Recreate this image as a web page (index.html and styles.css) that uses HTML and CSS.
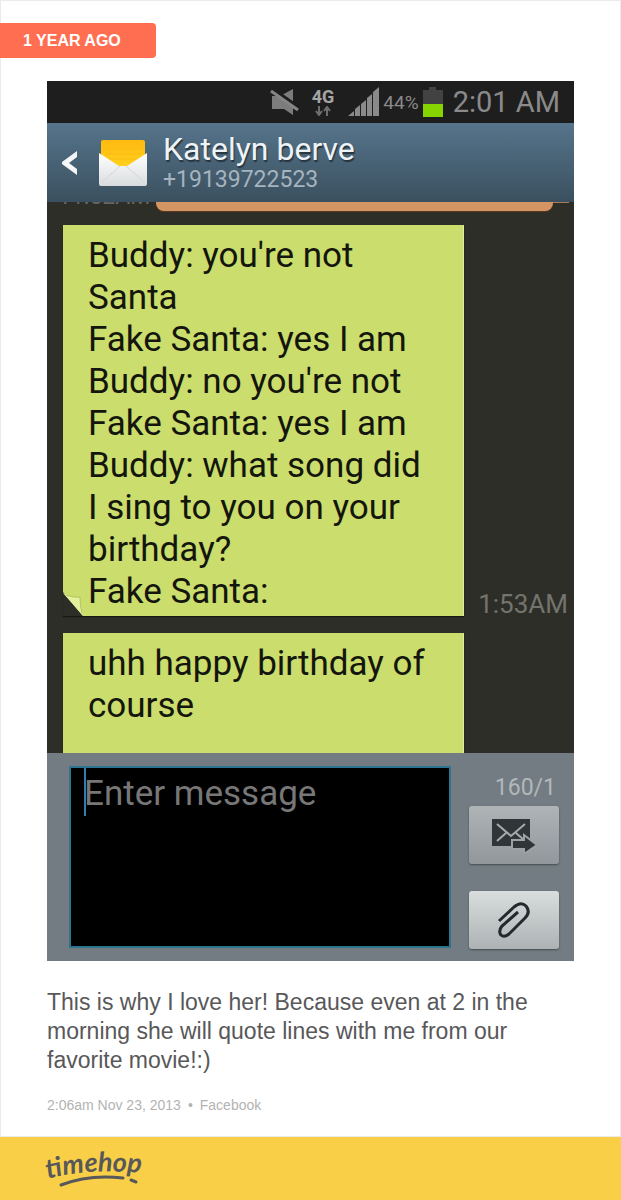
FILE: index.html
```html
<!DOCTYPE html>
<html lang="en">
  <head>
    <meta charset="UTF-8" />
    <meta name="viewport" content="width=device-width, initial-scale=1.0" />
    <title>Timehop</title>
    <link rel="stylesheet" href="styles.css">
  </head>
  <body>
    <main class="card">
      <div class="badge">1 YEAR AGO</div>

      <div class="phone">
        <div class="status">
          <svg class="mute" width="30" height="28" viewBox="0 0 30 28">
            <path d="M2 8h8L23 1v26l-9-6H2z" fill="#7c7c7c" />
            <path d="M1 0l28 20" stroke="#1e1e1e" stroke-width="4" />
            <path d="M1 3l27 19" stroke="#858585" stroke-width="3" />
          </svg>
          <div class="network">
            <span>4G</span>
            <svg width="16" height="10" viewBox="0 0 16 10">
              <path d="M4 0v8M1 5l3 4 3-4M12 10V2M9 5l3-4 3 4" fill="none" stroke="#6f6f6f" stroke-width="2" />
            </svg>
          </div>
          <svg class="signal" width="32" height="30" viewBox="0 0 32 30">
            <path d="M0 29l6-5v5zM7 22l5-4v11H7zM13 17l5-4v16h-5zM19 11l5-4v22h-5zM25 5l6-5v29h-6z" fill="#8a8a8a" />
          </svg>
          <span class="percent">44%</span>
          <svg class="battery" width="20" height="30" viewBox="0 0 20 30">
            <path d="M0 3h6V0h7v3h7v14H0z" fill="#424242" />
            <path d="M0 17h20v13H0z" fill="#86d500" />
          </svg>
          <span class="clock">2:01 AM</span>
        </div>

        <div class="contact">
          <button class="back" aria-label="Back">
            <svg width="18" height="26" viewBox="0 0 18 26">
              <path d="M16 1v6l-8 6 8 6v6L1 14v-2z" fill="#f4f6f7" />
            </svg>
          </button>
          <svg class="mail" width="48" height="48" viewBox="0 0 48 48">
            <defs>
              <linearGradient id="paper" x1="0" y1="0" x2="0" y2="1">
                <stop offset="0" stop-color="#ffba10" />
                <stop offset="1" stop-color="#ffd21c" />
              </linearGradient>
              <linearGradient id="cover" x1="0" y1="0" x2="0" y2="1">
                <stop offset="0" stop-color="#fff" />
                <stop offset="1" stop-color="#d9dcde" />
              </linearGradient>
            </defs>
            <path d="M2 3q0-2 2-2h40q2 0 2 2v26H2z" fill="url(#paper)" />
            <path d="M4 10h40M6 15h36M10 20h28" stroke="#f3a914" stroke-opacity=".4" />
            <path d="M0 14l17 11q2 2 4 2h6q2 0 4-2l17-11v31q0 2-2 2H2q-2 0-2-2z" fill="url(#cover)" />
            <path d="M3 43l18-16M45 43L27 27" fill="none" stroke="#d3d7d9" />
          </svg>
          <div class="who">
            <div class="name">Katelyn berve</div>
            <div class="number">+19139722523</div>
          </div>
        </div>

        <div class="thread">
          <div class="previous">
            <span class="earlier">11:52AM</span>
            <div class="sent"></div>
          </div>
          <div class="row">
            <div class="bubble">
              Buddy: you're not Santa<br />
              Fake Santa: yes I am<br />
              Buddy: no you're not<br />
              Fake Santa: yes I am<br />
              Buddy: what song did I&nbsp;sing to you on your birthday?<br />
              Fake Santa:
              <svg class="curl" width="20" height="24" viewBox="0 0 20 24">
                <path d="M0 0v24h20z" fill="#2d2e27" />
                <path d="M0 1q9 5 17 4 0 9 3 19z" fill="#e3f09c" />
                <path d="M3 3q8 3 14 2 0 9 2 16" fill="none" stroke="#b3c25f" />
              </svg>
            </div>
            <span class="time">1:53AM</span>
          </div>
          <div class="row">
            <div class="bubble cut">uhh happy birthday of course</div>
          </div>
        </div>

        <div class="compose">
          <div class="field">
            <textarea aria-label="Message" placeholder="Enter message"></textarea>
            <i class="caret"></i>
          </div>
          <div class="tools">
            <span class="count">160/1</span>
            <button class="send" aria-label="Send">
              <svg width="46" height="36" viewBox="0 0 46 36">
                <path d="M1 2h38v27H1z" fill="#303538" />
                <path d="M6 7l14 12L34 7M6 24l9-8M25 16l8 7" fill="none" stroke="#a5aaad" stroke-width="2" />
                <path d="M21 23h12v-5l13 10-13 9v-5H21z" fill="#303538" stroke="#9da2a5" stroke-width="2" />
              </svg>
            </button>
            <button class="attach" aria-label="Attach">
              <svg width="36" height="38" viewBox="0 0 36 38">
                <path d="M3 20L18 6q7-6 12-1 5 6-1 12L13 33q-5 4-8 1-3-4 1-9l16-14" fill="none" stroke="#26292b" stroke-width="3" />
              </svg>
            </button>
          </div>
        </div>
      </div>

      <p class="caption">This is why I love her! Because even at 2 in the morning she will quote lines with me from our favorite movie!:)</p>
      <p class="meta"><span>2:06am Nov 23, 2013</span><span>•</span><span>Facebook</span></p>
    </main>

    <footer class="footer">
      <svg class="logo" width="96" height="42" viewBox="0 0 96 42" role="img" aria-label="timehop">
        <path id="arc" d="M2 33Q40 22 96 27" fill="none" />
        <text><textPath href="#arc">timehop</textPath></text>
        <path d="M15 39Q43 28 77 32M85 34l5 2" fill="none" stroke="#58585a" stroke-width="3" stroke-linecap="round" />
      </svg>
    </footer>
  </body>
</html>
```
FILE: styles.css
```css
* {
  box-sizing: border-box;
}
body {
  margin: 0;
  background-color: #fff;
  font-family: "Liberation Sans", Arial, sans-serif;
}
button {
  border: none;
  padding: 0;
  background: none;
  cursor: pointer;
}
.card {
  border: 1px solid #ebebeb;
  padding: 22px 46px;
}
.badge {
  width: 156px;
  height: 35px;
  margin-left: -47px;
  padding-left: 23px;
  border-radius: 0 4px 4px 0;
  background-color: #ff6e50;
  color: #fff;
  font-size: 16px;
  font-weight: bold;
  line-height: 35px;
}

/* phone */
.phone {
  margin-top: 23px;
  background-color: #2d2e27;
  font-family: Roboto, sans-serif;
}
.status {
  display: flex;
  align-items: center;
  justify-content: flex-end;
  height: 42px;
  padding-right: 14px;
  background-color: #1e1e1e;
  color: #8a8a8a;
}
.mute {
  margin-right: 12px;
}
.network {
  display: flex;
  flex-direction: column;
  align-items: center;
  margin-right: 14px;
  color: #a5a5a5;
  font-size: 18px;
  font-weight: bold;
  line-height: 18px;
}
.signal {
  margin-right: 3px;
}
.percent {
  margin-right: 4px;
  font-size: 19px;
}
.battery {
  margin-right: 10px;
}
.clock {
  font-size: 29px;
}
.contact {
  display: flex;
  align-items: center;
  height: 79px;
  padding-left: 14px;
  background: linear-gradient(#56748b, #3a505f);
}
.back {
  display: flex;
  width: 38px;
}
.who {
  margin-left: 16px;
  white-space: nowrap;
}
.name {
  color: #edf3f7;
  font-size: 32px;
  line-height: 35px;
  text-shadow: 1px 2px 1px #26343e;
}
.number {
  color: #a5b4be;
  font-size: 23px;
  line-height: 26px;
}
.thread {
  height: 551px;
  overflow: hidden;
}
.previous {
  display: flex;
  align-items: flex-end;
  justify-content: space-between;
  height: 9px;
  margin: 0 5px 14px 11px;
  background: linear-gradient(#a87a58, #a87a58) right top / 40px 1px no-repeat;
}
.earlier {
  padding-bottom: 6px;
  color: #666760;
  font-size: 23px;
  line-height: 17px;
}
.sent {
  width: 397px;
  height: 9px;
  margin-right: 16px;
  border-radius: 0 0 8px 8px;
  background-color: #d59463;
  box-shadow: 0 1px 1px #5e3b20;
}
.row {
  display: flex;
  align-items: flex-end;
  margin: 0 6px 17px 16px;
}
.bubble {
  position: relative;
  flex: 0 0 401px;
  padding: 10px 20px 3px 25px;
  border-right: 1px solid #dfeaa5;
  background-color: #cbdd6c;
  box-shadow: 0 1px 1px #171810;
  color: #14160e;
  font-size: 35px;
  line-height: 42px;
}
.curl {
  position: absolute;
  left: 0;
  bottom: 0;
}
.cut {
  height: 130px;
}
.time {
  margin-left: auto;
  color: #74746e;
  font-size: 26px;
  line-height: 24px;
}
.compose {
  display: flex;
  height: 208px;
  padding: 13px 15px 12px 22px;
  background-color: #727c82;
}
.field {
  position: relative;
  flex: 1;
}
.field textarea {
  display: block;
  width: 100%;
  height: 182px;
  padding: 5px 13px;
  border: 2px solid #2c7591;
  outline: none;
  background-color: #000;
  color: #ddd;
  font-family: Roboto, sans-serif;
  font-size: 35px;
  line-height: 42px;
  resize: none;
}
.field textarea::placeholder {
  color: #777;
  opacity: 1;
}
.caret {
  position: absolute;
  left: 15px;
  top: 2px;
  width: 2px;
  height: 48px;
  background-color: #347cab;
}
.tools {
  display: flex;
  flex-direction: column;
  width: 108px;
  padding-left: 18px;
}
.count {
  height: 40px;
  padding-right: 3px;
  color: #b2b8bb;
  font-size: 23px;
  line-height: 44px;
  text-align: right;
}
.send,
.attach {
  display: flex;
  align-items: center;
  justify-content: center;
  height: 58px;
  border-radius: 3px;
  box-shadow: 0 1px 2px #444c50;
}
.send {
  margin-bottom: 27px;
  background: linear-gradient(#afb4b7, #91979b);
}
.attach {
  background: linear-gradient(#d9dddd, #adb2b4);
}

/* text below the photo */
.caption {
  margin: 27px 0 0;
  color: #58585a;
  font-size: 23px;
  line-height: 29px;
}
.meta {
  display: flex;
  gap: 7px;
  margin: 21px 0 0;
  color: #b3b3b3;
  font-size: 14px;
  line-height: 18px;
}
.footer {
  height: 63px;
  padding: 9px 46px;
  background-color: #f9cf48;
}
.logo {
  display: block;
  overflow: visible;
  fill: #58585a;
  font-family: Lato, sans-serif;
  font-size: 27px;
  font-style: italic;
  font-weight: bold;
}
```
